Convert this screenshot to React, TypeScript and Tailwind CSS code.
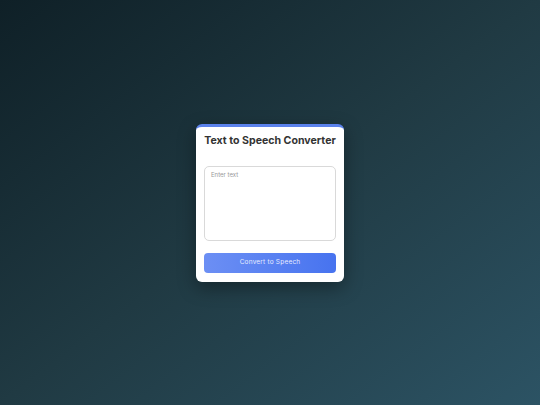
import { useState } from "react";

export default function App() {
  const [text, setText] = useState("");

  return (
    <div
      className="flex h-screen w-full items-center justify-center bg-gradient-to-br from-[#0f2027] via-[#203a43] to-[#2c5364]"
      style={{ fontFamily: "Inter, 'Open Sans', sans-serif" }}
    >
      <div className="flex w-[148px] flex-col rounded-[6px] border-t-[3px] border-[#5b82ec] bg-white px-[8px] pb-[9px] pt-[6px] shadow-[0_6px_18px_rgba(0,0,0,0.35)]">
        <h1 className="whitespace-nowrap text-center text-[10.6px] font-bold leading-[16px] text-[#333333]">
          Text to Speech Converter
        </h1>
        <textarea
          value={text}
          onChange={(e) => setText(e.target.value)}
          placeholder="Enter text"
          className="mt-[17px] h-[75px] w-full resize-none rounded-[5px] border border-[#d9d9d9] px-[6px] py-[3px] text-[6px] leading-[9px] text-[#333] outline-none placeholder:text-[#9a9a9a]"
        />
        <button className="mt-[12px] h-[20px] w-full rounded-[4px] bg-gradient-to-r from-[#6c8ff4] to-[#4773ef] text-[6.5px] tracking-[0.2px] text-[#e6ecff]">
          Convert to Speech
        </button>
      </div>
    </div>
  );
}
